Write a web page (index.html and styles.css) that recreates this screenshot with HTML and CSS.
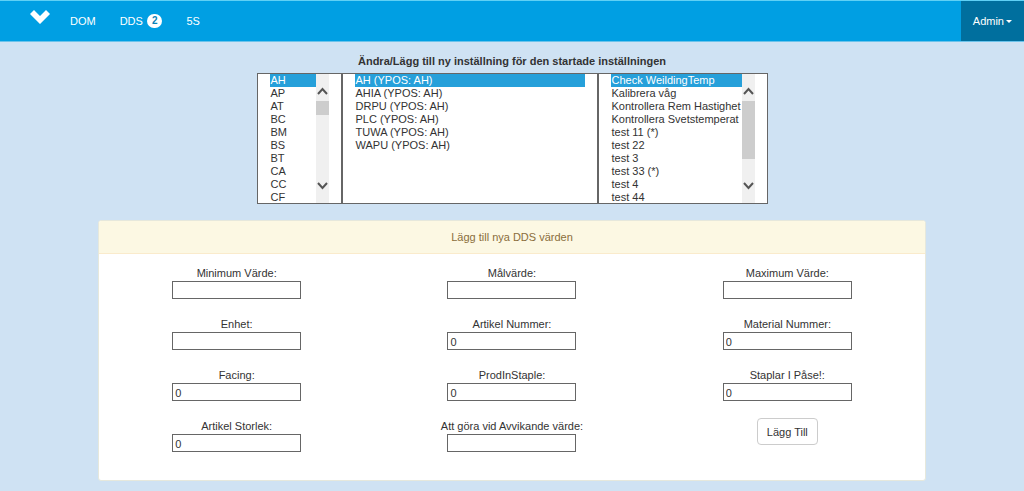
FILE: index.html
```html
<!DOCTYPE html>
<html lang="sv">
<head>
<meta charset="utf-8">
<meta name="viewport" content="width=device-width, initial-scale=1">
<title>DDS</title>
<link rel="stylesheet" href="styles.css">
</head>
<body>
<nav class="navbar">
  <a class="brand" href="#" aria-label="Start"><svg width="20" height="14" viewBox="0 0 20 14"><path d="M0 4L4 0L10 6L16 0L20 4L10 14Z" fill="#fff"/></svg></a>
  <a class="nav-link" href="#">DOM</a>
  <a class="nav-link" href="#">DDS <span class="badge">2</span></a>
  <a class="nav-link" href="#">5S</a>
  <button class="admin" type="button">Admin<span class="caret"></span></button>
</nav>
<main>
  <section class="picker">
    <h1 class="title">Ändra/Lägg till ny inställning för den startade inställningen</h1>
    <div class="lists">
      <div class="list list-group">
        <select class="options" size="10" multiple aria-label="Grupp">
          <option selected>AH</option><option>AP</option><option>AT</option><option>BC</option><option>BM</option><option>BS</option><option>BT</option><option>CA</option><option>CC</option><option>CF</option>
        </select>
        <div class="scroll" aria-hidden="true">
          <svg class="arrow" width="11" height="8" viewBox="0 0 11 8"><path d="M1 7L5.500 2L10 7" fill="none" stroke="#555" stroke-width="2"/></svg>
          <div class="track"><div class="thumb thumb-short"></div></div>
          <svg class="arrow" width="11" height="8" viewBox="0 0 11 8"><path d="M1 1L5.500 6L10 1" fill="none" stroke="#555" stroke-width="2"/></svg>
        </div>
      </div>
      <div class="list list-machine">
        <select class="options" size="10" multiple aria-label="Maskin">
          <option selected>AH (YPOS: AH)</option><option>AHIA (YPOS: AH)</option><option>DRPU (YPOS: AH)</option><option>PLC (YPOS: AH)</option><option>TUWA (YPOS: AH)</option><option>WAPU (YPOS: AH)</option>
        </select>
      </div>
      <div class="list list-setting">
        <select class="options" size="10" multiple aria-label="Inställning">
          <option selected>Check WeildingTemp</option><option>Kalibrera våg</option><option>Kontrollera Rem Hastighet</option><option>Kontrollera Svetstemperat</option><option>test 11 (*)</option><option>test 22</option><option>test 3</option><option>test 33 (*)</option><option>test 4</option><option>test 44</option>
        </select>
        <div class="scroll" aria-hidden="true">
          <svg class="arrow" width="11" height="8" viewBox="0 0 11 8"><path d="M1 7L5.500 2L10 7" fill="none" stroke="#555" stroke-width="2"/></svg>
          <div class="track"><div class="thumb thumb-long"></div></div>
          <svg class="arrow" width="11" height="8" viewBox="0 0 11 8"><path d="M1 1L5.500 6L10 1" fill="none" stroke="#555" stroke-width="2"/></svg>
        </div>
      </div>
    </div>
  </section>
  <section class="panel">
    <h2 class="panel-heading">Lägg till nya DDS värden</h2>
    <form class="fields">
      <div class="field"><label for="min">Minimum Värde:</label><input id="min" type="text"></div>
      <div class="field"><label for="target">Målvärde:</label><input id="target" type="text"></div>
      <div class="field"><label for="max">Maximum Värde:</label><input id="max" type="text"></div>
      <div class="field"><label for="unit">Enhet:</label><input id="unit" type="text"></div>
      <div class="field"><label for="article">Artikel Nummer:</label><input id="article" type="text" value="0"></div>
      <div class="field"><label for="material">Material Nummer:</label><input id="material" type="text" value="0"></div>
      <div class="field"><label for="facing">Facing:</label><input id="facing" type="text" value="0"></div>
      <div class="field"><label for="staple">ProdInStaple:</label><input id="staple" type="text" value="0"></div>
      <div class="field"><label for="bag">Staplar I Påse!:</label><input id="bag" type="text" value="0"></div>
      <div class="field"><label for="size">Artikel Storlek:</label><input id="size" type="text" value="0"></div>
      <div class="field"><label for="action">Att göra vid Avvikande värde:</label><input id="action" type="text"></div>
      <div class="field"><button class="submit" type="button">Lägg Till</button></div>
    </form>
  </section>
</main>
</body>
</html>
```
FILE: styles.css
```css
* { box-sizing: border-box; }
body {
  margin: 0;
  min-height: 100vh;
  background: #cfe2f3;
  color: #333;
  font: 11px/16px "Liberation Sans", Arial, sans-serif;
}
.navbar {
  display: flex;
  height: 42px;
  padding-left: 30px;
  background: #009fe3;
  border-top: 1px solid #5fd0f5;
  border-bottom: 1px solid #6cc3ea;
}
.brand { padding-top: 9px; margin-right: 8px; line-height: 0; }
.nav-link {
  display: flex;
  align-items: center;
  gap: 4px;
  padding: 0 12px;
  color: #fff;
  text-decoration: none;
}
.badge {
  padding: 0 5px;
  border-radius: 8px;
  background: #fff;
  color: #0a82b8;
  font-size: 10px;
  line-height: 14px;
  font-weight: bold;
}
.admin {
  display: flex;
  align-items: center;
  gap: 2px;
  margin-left: auto;
  padding: 0 12px;
  border: 0;
  background: #006f9e;
  color: #fff;
  font: inherit;
}
.caret {
  border: 3px solid transparent;
  border-top-color: #fff;
  border-bottom: 0;
}
.title {
  margin: 0;
  padding: 11px 0 4px;
  font-size: 11px;
  line-height: 16px;
  text-align: center;
}
.lists { display: flex; justify-content: center; }
.list {
  display: flex;
  height: 131px;
  padding: 0 12px;
  overflow: hidden;
  background: #fff;
  border: 1px solid #666;
}
.list-group { width: 85px; }
.list-machine { width: 256px; }
.list-setting { width: 170px; }
.options {
  flex: 1;
  min-width: 0;
  height: 130px;
  padding: 0;
  overflow: hidden;
  border: 0;
  border-radius: 0;
  outline: 0;
  background: #fff;
  color: #333;
  font: inherit;
}
.options option {
  min-height: 13px;
  height: 13px;
  padding: 0 1px;
  line-height: 13px;
  overflow: hidden;
}
.options option:checked {
  background: #26a0da linear-gradient(#26a0da, #26a0da);
  color: #fff;
  -webkit-text-fill-color: #fff;
}
.scroll {
  display: flex;
  flex-direction: column;
  align-items: center;
  width: 13px;
  padding: 13px 0;
  background: #f0f0f0;
}
.arrow { flex: none; }
.track { flex: 1; width: 100%; padding: 6px 0; }
.thumb { background: #cdcdcd; }
.thumb-short { height: 14px; }
.thumb-long { height: 58px; }
.panel {
  margin: 16px 98px 10px;
  background: #fff;
  border: 1px solid #e6e8dc;
  border-radius: 3px;
}
.panel-heading {
  margin: 0;
  padding: 8px 0;
  border-bottom: 1px solid #faebcc;
  border-radius: 2px 2px 0 0;
  background: #fcf8e3;
  color: #8a6d3b;
  font-size: 11px;
  line-height: 16px;
  font-weight: normal;
  text-align: center;
}
.fields {
  display: grid;
  grid-template-columns: repeat(3, 1fr);
  row-gap: 17px;
  padding: 11px 0 28px;
}
.field {
  display: flex;
  flex-direction: column;
  align-items: center;
}
.field input {
  width: 129px;
  height: 18px;
  padding: 2px 2px 0;
  border: 1px solid #666;
  border-radius: 0;
  background: #fff;
  color: #333;
  font: inherit;
}
.submit {
  height: 27px;
  padding: 0 9px;
  border: 1px solid #ccc;
  border-radius: 4px;
  background: #fff;
  color: #333;
  font: inherit;
}
```
